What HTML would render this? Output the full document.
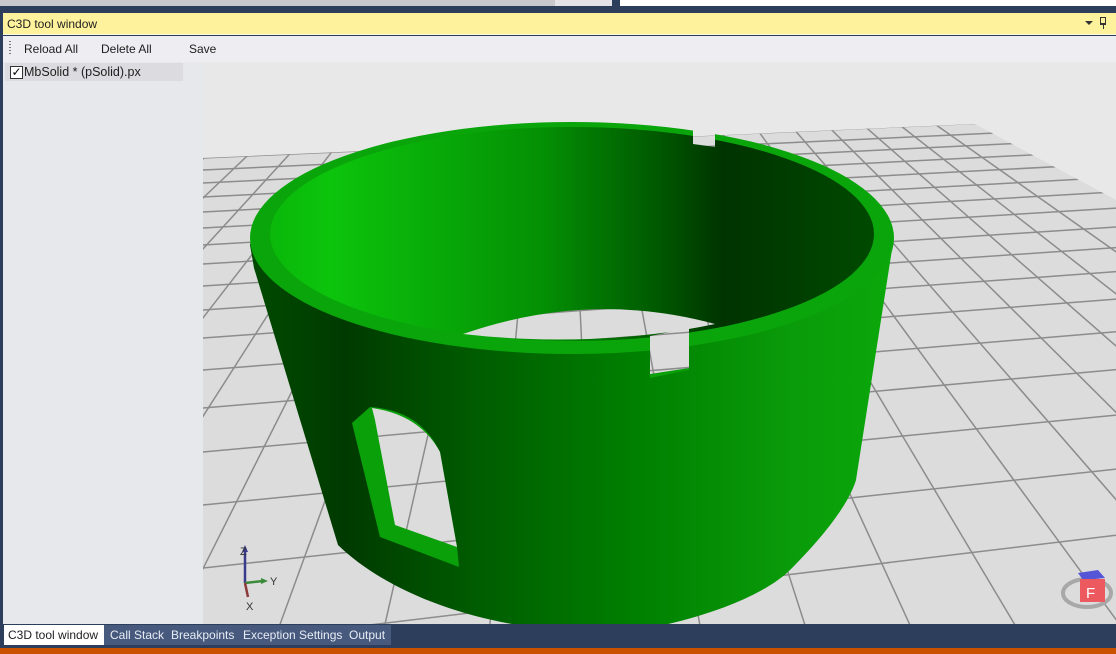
<!DOCTYPE html>
<html><head><meta charset="utf-8"><style>
*{margin:0;padding:0;box-sizing:border-box}
html,body{width:1116px;height:654px;overflow:hidden}
body{background:#2d3e5c;font-family:"Liberation Sans",sans-serif;font-size:12px;position:relative}
.a{position:absolute;white-space:nowrap}
</style></head><body>
<div class="a" style="left:0;top:0;width:555px;height:6px;background:#c9c9cd"></div>
<div class="a" style="left:555px;top:0;width:57px;height:6px;background:#e4e4e8"></div>
<div class="a" style="left:620px;top:0;width:496px;height:6px;background:#fff"></div>
<div class="a" style="left:3px;top:13px;width:1113px;height:22px;background:#fff29d;border-bottom:1px solid #fffbe0"></div>
<div class="a" style="left:7px;top:17px;color:#1e1e1e">C3D tool window</div>
<div class="a" style="left:1085px;top:21px;width:0;height:0;border-left:4px solid transparent;border-right:4px solid transparent;border-top:4px solid #333"></div>
<div class="a" style="left:1100px;top:17px;width:6px;height:8px;border:1px solid #333;border-bottom-width:2px"></div>
<div class="a" style="left:1103px;top:25px;width:1px;height:4px;background:#333"></div>
<div class="a" style="left:3px;top:36px;width:1113px;height:26px;background:#eeeef2"></div>
<div class="a" style="left:9px;top:41px;width:2px;height:14px;background:repeating-linear-gradient(#777 0 1px,transparent 1px 3px)"></div>
<div class="a" style="left:24px;top:42px;color:#1e1e1e">Reload All</div>
<div class="a" style="left:101px;top:42px;color:#1e1e1e">Delete All</div>
<div class="a" style="left:189px;top:42px;color:#1e1e1e">Save</div>
<div class="a" style="left:3px;top:62px;width:200px;height:562px;background:#e7e8ec"></div>
<div class="a" style="left:5px;top:63px;width:178px;height:18px;background:#dcdce0"></div>
<div class="a" style="left:10px;top:66px;width:13px;height:13px;background:#fff;border:1px solid #333;font-size:12px;line-height:11px;text-align:center;color:#000">✓</div>
<div class="a" style="left:24px;top:65px;color:#1e1e1e;font-size:12.5px">MbSolid * (pSolid).px</div>

<svg class="a" style="left:203px;top:62px" width="913" height="562" viewBox="203 62 913 562">
<defs>
<clipPath id="gc"><polygon points="203,158 975,124 1116,200 1116,624 203,624"/></clipPath>
<linearGradient id="body" x1="250" x2="893" y1="0" y2="0" gradientUnits="userSpaceOnUse">
<stop offset="0" stop-color="#004a00"/><stop offset="0.15" stop-color="#003a00"/><stop offset="0.35" stop-color="#005c00"/><stop offset="0.6" stop-color="#008000"/><stop offset="0.85" stop-color="#0a9c0a"/><stop offset="1" stop-color="#0aa80a"/></linearGradient>
<linearGradient id="inner" x1="270" x2="875" y1="0" y2="0" gradientUnits="userSpaceOnUse">
<stop offset="0" stop-color="#0ab80a"/><stop offset="0.1" stop-color="#0cc40c"/><stop offset="0.45" stop-color="#049004"/><stop offset="0.65" stop-color="#005600"/><stop offset="0.75" stop-color="#003300"/><stop offset="1" stop-color="#004a00"/></linearGradient>
<mask id="m" maskUnits="userSpaceOnUse" x="203" y="62" width="913" height="562">
<rect x="203" y="62" width="913" height="562" fill="#fff"/>
<path d="M463,334 Q590,290 715,324 A302,107 0 0 1 463,334Z" fill="#000"/>
<polygon points="650,336 689,328 689,368 650,374" fill="#000"/>
<polygon points="693,122 715,124 715,147 693,144" fill="#000"/>
<path d="M372,408 Q420,415 440,452 L457,547 L395,525 L375,420Z" fill="#000"/>
</mask>
</defs>
<rect x="203" y="62" width="913" height="562" fill="#e8e8e9"/>
<g clip-path="url(#gc)"><rect x="203" y="100" width="913" height="530" fill="#dcdcdd"/><g id="grid" stroke="#8c8c8c" stroke-width="1.5"></g></g>
<g mask="url(#m)">
<path d="M250,245 L254,268 L338,545 C400,605 520,640 640,630 C720,615 770,590 790,570 C830,530 850,500 856,480 L893,243 A322,118 0 0 0 250,245Z" fill="url(#body)"/>
<ellipse cx="572" cy="238" rx="322" ry="116" fill="#0aa50a"/>
<ellipse cx="572" cy="234" rx="302" ry="107" fill="url(#inner)"/>
<polygon points="650,370 689,362 689,370 650,378" fill="#0aa00a"/>
<path d="M352,423 L370,407 Q420,410 440,452 L457,547 L459,567 L380,537Z" fill="#0aa00a"/>
</g>
<g stroke-width="2.5" fill="none">
<path d="M245,583 L245,548" stroke="#3a3a8c"/><path d="M242,552 L245,545 L248,552Z" fill="#3a3a8c" stroke="none"/>
<path d="M245,583 L263,581" stroke="#3a8a3a"/><path d="M261,578 L268,581 L261,584Z" fill="#3a8a3a" stroke="none"/>
<path d="M245,583 L248,597" stroke="#8c3a3a"/>
</g>
<text x="240" y="555" font-size="11" fill="#333" font-family="Liberation Sans">Z</text>
<text x="270" y="585" font-size="11" fill="#333" font-family="Liberation Sans">Y</text>
<text x="246" y="610" font-size="11" fill="#333" font-family="Liberation Sans">X</text>
<ellipse cx="1087" cy="593" rx="24" ry="14" fill="none" stroke="#a8a8a8" stroke-width="4"/>
<polygon points="1078,573 1098,570 1105,578 1083,580" fill="#5555d8"/>
<rect x="1080" y="579" width="25" height="23" fill="#ec5a60"/>
<text x="1086" y="598" font-size="15" fill="#fff" font-family="Liberation Sans">F</text>
</svg>

<div class="a" style="left:4px;top:625px;width:100px;height:20px;background:#fff"></div>
<div class="a" style="left:104px;top:625px;width:287px;height:20px;background:#475a7e"></div>
<div class="a" style="left:8px;top:628px;color:#1e1e1e">C3D tool window</div>
<div class="a" style="left:110px;top:628px;color:#e8ecf4">Call Stack</div>
<div class="a" style="left:171px;top:628px;color:#e8ecf4">Breakpoints</div>
<div class="a" style="left:243px;top:628px;color:#e8ecf4">Exception Settings</div>
<div class="a" style="left:349px;top:628px;color:#e8ecf4">Output</div>
<div class="a" style="left:0;top:648px;width:1116px;height:6px;background:#ca5100"></div>
<script>
(function(){
var g=document.getElementById('grid'),s='';
var VA=[6660,-131],VB=[559,-141];
var ys=[158,170,183,197,212,228,245,264,286,310,338,370,408,452,505,568,645];
ys.forEach(function(y){var m=(VA[1]-y)/(VA[0]-203);s+='<line x1="203" y1="'+y+'" x2="1116" y2="'+(y+m*913)+'"/>';});
for(var k=-14;k<=18;k++){var x=245+41*k;var d=(x-VB[0])/(158-VB[1]);var x2=VB[0]+d*(700-VB[1]);s+='<line x1="'+(VB[0]+d*(100-VB[1]))+'" y1="100" x2="'+x2+'" y2="700"/>';}
g.innerHTML=s;
})();
</script>
</body></html>
